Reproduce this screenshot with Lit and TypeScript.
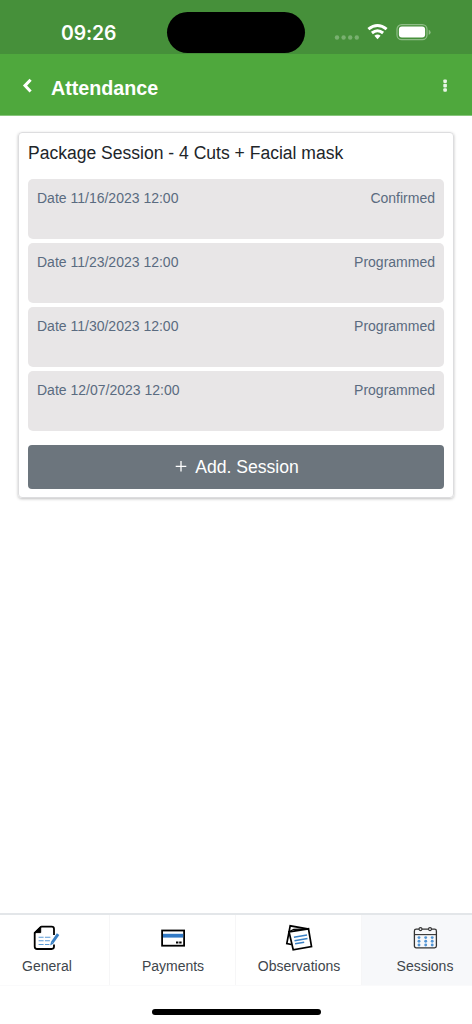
import { LitElement, html, css, svg } from "lit";
import { customElement } from "lit/decorators.js";
import { classMap } from "lit/directives/class-map.js";

const sessions = [
  { date: "11/16/2023 12:00", status: "Confirmed" },
  { date: "11/23/2023 12:00", status: "Programmed" },
  { date: "11/30/2023 12:00", status: "Programmed" },
  { date: "12/07/2023 12:00", status: "Programmed" },
];

const generalIcon = svg`<g transform="translate(-0.9 0)">
  <path d="M9 2.7H19.5Q21.9 2.7 21.9 5V11M21.9 20.5V22.6Q21.9 25 19.5 25H5Q2.6 25 2.6 22.6V9L9 2.7" fill="none" stroke="#000" stroke-width="1.8"/>
  <path d="M8.6 2.7V8.6H2.6Z" fill="#000" stroke="#000" stroke-linejoin="round"/>
  <path d="M6.5 13.3h5M12.8 13.3h5.5M6.5 16.7h5M12.8 16.7h5M6.5 20.5h5M12.8 20.5h4.5" stroke="#5b9bd8" stroke-width="1.1"/>
  <path d="M26 10.2L20.2 18.5" stroke="#3a80c4" stroke-width="3"/>
  <path d="M19 17.6L18 21.6L21.6 19.6Z" fill="#3a80c4"/></g>`;

const paymentsIcon = svg`<g transform="translate(-0.4 0)">
  <rect x="3.5" y="6.5" width="22" height="15.2" fill="#fff" stroke="#000" stroke-width="1.8"/>
  <rect x="4.4" y="9.8" width="20.2" height="3.8" fill="#3179c5"/>
  <path d="M17.4 18.4h2.4M20.6 18.4h2.4" stroke="#000" stroke-width="2"/></g>`;

const observationsIcon = svg`<g transform="translate(-0.8 -0.2)">
  <path d="M7.3 20.7L2.6 19.7L6 2L24.8 5.4" fill="#fff" stroke="#000" stroke-width="1.7"/>
  <path d="M4.8 8L24.3 5L27.3 22.8L9 26Z" fill="#fff" stroke="#000" stroke-width="1.7"/>
  <path d="M5.4 7.8L9.5 5.5L24.3 5" fill="none" stroke="#000" stroke-width="1.2"/>
  <path d="M9.7 13.5L22.8 11.2M10.3 16.9L23.3 14.6M10.9 20L20 18.4" stroke="#3a80c4" stroke-width="1.5"/></g>`;

const sessionsIcon = svg`
  <rect x="3.4" y="5.2" width="22" height="18.6" rx="1.8" fill="none" stroke="#333" stroke-width="1.3"/>
  <path d="M3.4 10.6h22" stroke="#333" stroke-width="1.1"/>
  <circle cx="9.5" cy="5.1" r="1.5" fill="#f7f8fa" stroke="#333" stroke-width="1.1"/>
  <circle cx="19" cy="5.1" r="1.5" fill="#f7f8fa" stroke="#333" stroke-width="1.1"/>
  ${[13.6, 17.3, 21].map((y) => [8, 14.7, 21.2].map((x) => svg`<circle cx=${x} cy=${y} r="1.45" fill="#5194d4"/>`))}`;

const tabs = [
  { label: "General", icon: generalIcon, active: false },
  { label: "Payments", icon: paymentsIcon, active: false },
  { label: "Observations", icon: observationsIcon, active: false },
  { label: "Sessions", icon: sessionsIcon, active: true },
];

@customElement("app-root")
export class AppRoot extends LitElement {
  static styles = css`
    :host {
      display: flex;
      flex-direction: column;
      height: 1024px;
      overflow: hidden;
      background: #fff;
      font-family: "Liberation Sans", Arial, sans-serif;
    }
    * { box-sizing: border-box; }
    svg { display: block; }
    .status {
      height: 54px;
      flex: none;
      background: #46903a;
      display: flex;
      align-items: flex-start;
      color: #fff;
    }
    .time {
      width: 167px;
      padding: 21px 0 0 61px;
      font: 600 19.4px/25px Inter, sans-serif;
      letter-spacing: -0.1px;
    }
    .island {
      width: 138px;
      height: 41px;
      margin-top: 12px;
      border-radius: 21px;
      background: #000;
    }
    .indicators { margin: 20px 0 0 29px; }
    .header {
      height: 62px;
      flex: none;
      display: flex;
      align-items: center;
      padding: 0 23px 0 22px;
      background: #4fa83d;
      border-bottom: 1px solid #88c57c;
      color: #fff;
    }
    .back { margin: 0 18px 0 0; }
    .title {
      flex: 1;
      margin: 0;
      padding-top: 7px;
      font-size: 19.7px;
      line-height: 24px;
      font-weight: 700;
    }
    .content { flex: 1; padding: 16px 18px 0 18px; }
    .card {
      border: 1px solid #dddddf;
      border-radius: 4px;
      box-shadow: 0 1px 3px rgba(0, 0, 0, 0.25);
      padding: 8px 9px 9px 9px;
      height: 366px;
    }
    .package {
      margin: 0 0 13px;
      font-size: 17.55px;
      line-height: 25px;
      font-weight: 400;
      color: #212529;
    }
    .list { display: flex; flex-direction: column; gap: 4px; }
    .session {
      height: 60px;
      padding: 10px 9px;
      display: flex;
      justify-content: space-between;
      background: #e8e6e7;
      border-radius: 5px;
      font-size: 14px;
      line-height: 18px;
      color: #5a6b80;
    }
    .add {
      margin-top: 13.5px;
      width: 100%;
      height: 44px;
      display: flex;
      align-items: center;
      justify-content: center;
      gap: 8px;
      border: 0;
      padding: 1px 0 0 2px;
      border-radius: 4px;
      background: #6c757d;
      color: #fff;
      font: 17.6px/24px "Liberation Sans", Arial, sans-serif;
    }
    .tabs {
      flex: none;
      height: 73px;
      margin-left: -16px;
      display: flex;
      border-top: 2px solid #e3e6e9;
      border-bottom: 1px solid #fafafb;
    }
    .tab {
      flex: none;
      width: 126px;
      padding: 9px 0 0 1px;
      display: flex;
      flex-direction: column;
      align-items: center;
      border-right: 1px solid #f6f6f7;
      font-size: 14px;
      line-height: 20px;
    }
    .active { background: #f7f8fa; }
    .label { margin-top: 3px; color: #40464c; }
    .home { flex: none; height: 38px; display: flex; justify-content: center; padding-top: 23px; }
    .bar { width: 169px; height: 6px; border-radius: 3px; background: #000; }
  `;

  render() {
    return html`
      <div class="status">
        <div class="time">09:26</div>
        <div class="island"></div>
        <svg class="indicators" width="100" height="26" viewBox="0 0 100 26">
          ${[3, 9.6, 16.2, 22.8].map((x) => svg`<circle cx=${x} cy="17.5" r="2.2" fill="#79b070"/>`)}
          <g fill="none" stroke="#fff" stroke-width="3">
            <path d="M34.4 9.2Q43.5 1.8 52.6 9.2"/>
            <path d="M37.9 13Q43.5 8.4 49.1 13"/>
          </g>
          <path d="M40.4 15.7Q43.5 13.5 46.6 15.7L43.5 19.2Z" fill="#fff"/>
          <rect x="63" y="4.6" width="30" height="15" rx="4.7" fill="none" stroke="#8fbd87" stroke-width="1.2"/>
          <rect x="64.9" y="6.6" width="26.2" height="11" rx="3" fill="#fff"/>
          <path d="M94.7 9.7Q96.6 10.2 96.6 12.2Q96.6 14.2 94.7 14.7Z" fill="#8fbd87"/>
        </svg>
      </div>
      <header class="header">
        <svg class="back" width="11" height="16" viewBox="0 0 11 16">
          <path d="M8.6 2.7L3 8.6L8.6 14.5" fill="none" stroke="#fff" stroke-width="3"/>
        </svg>
        <h1 class="title">Attendance</h1>
        <svg width="8" height="16" viewBox="0 0 8 16">
          ${[4.2, 8.6, 13].map((y) => svg`<rect x="2.3" y=${y - 1.8} width="3.6" height="3.6" rx="1" fill="#e9f5e7"/>`)}
        </svg>
      </header>
      <main class="content">
        <section class="card">
          <h2 class="package">Package Session - 4 Cuts + Facial mask</h2>
          <div class="list">
            ${sessions.map((s) => html`
              <div class="session"><span>Date ${s.date}</span><span>${s.status}</span></div>
            `)}
          </div>
          <button class="add">
            <svg width="12" height="14" viewBox="0 0 12 14">
              <path d="M6 1V11.6M.7 6.3H11.3" stroke="#fff" stroke-width="1.3"/>
            </svg>
            <span>Add. Session</span>
          </button>
        </section>
      </main>
      <nav class="tabs">
        ${tabs.map((t) => html`
          <div class=${classMap({ tab: true, active: t.active })}>
            <svg width="29" height="29" viewBox="0 0 29 29">${t.icon}</svg>
            <span class="label">${t.label}</span>
          </div>
        `)}
      </nav>
      <div class="home"><div class="bar"></div></div>
    `;
  }
}
